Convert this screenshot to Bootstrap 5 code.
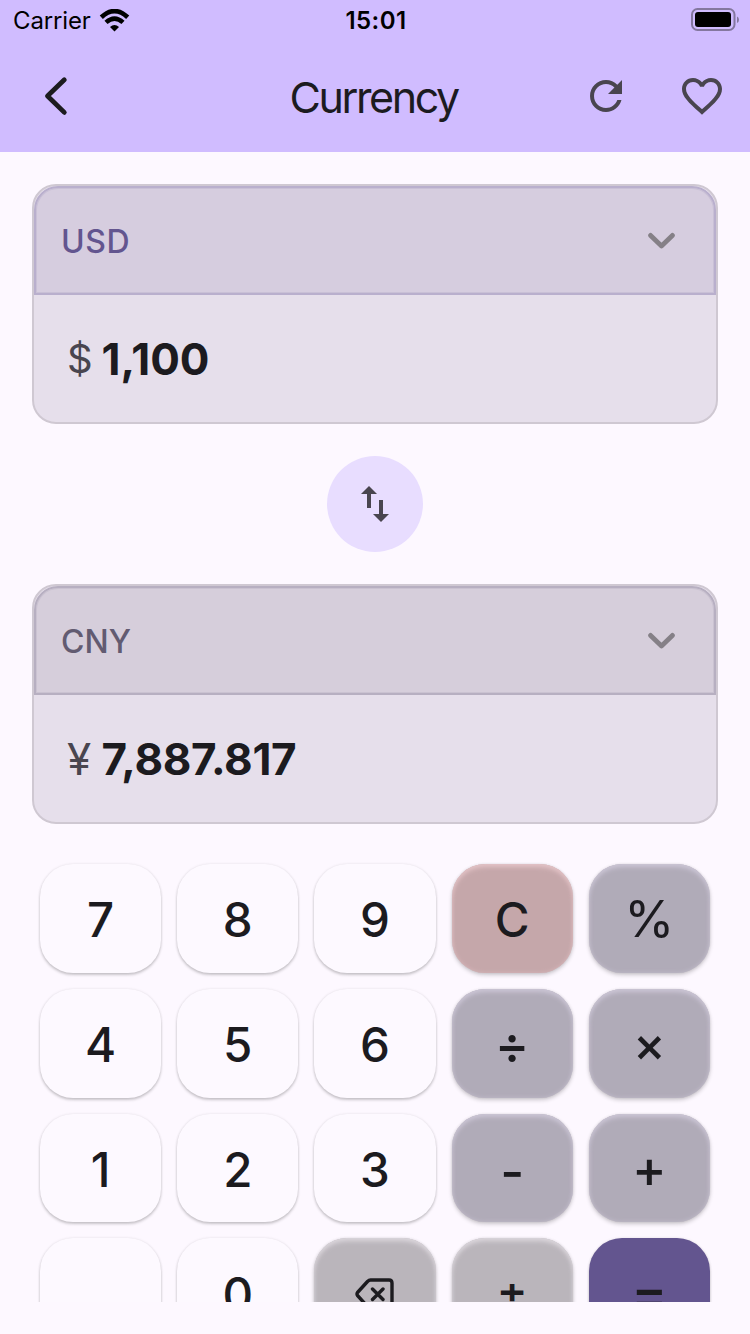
<!DOCTYPE html>
<html lang="en">
<head>
<meta charset="utf-8">
<meta name="viewport" content="width=device-width, initial-scale=1">
<title>Currency</title>
<link href="https://cdn.jsdelivr.net/npm/bootstrap@5.3.0/dist/css/bootstrap.min.css" rel="stylesheet">
<style>
  body { font-family: Inter, "Noto Sans CJK SC", sans-serif; background: #fdf8ff; color: #1c1b1f; height: 1334px; overflow: hidden; }
  svg { display: block; flex: none; }
  .app-top { background: #d0bcff; height: 152px; }
  .status { height: 40px; padding: 2px 11px 0 13px; color: #000; font-size: 24px; line-height: 38px; }
  .status > div { flex: 1 1 0; }
  .carrier { letter-spacing: -.15px; width: 78px; }
  .clock { font-weight: 600; letter-spacing: .4px; }
  .battery { margin-top: -2px; }
  .toolbar { height: 112px; padding: 0 24px; }
  .toolbar > div { flex: 1 1 0; }
  .title { font-size: 43px; font-weight: 400; letter-spacing: -2.400px; line-height: 56px; margin: 2px 0 0; width: 171px; white-space: nowrap; }
  .icon-btn { width: 48px; height: 48px; padding: 0; border: 0; background: none; color: #49454f; }
  .actions { gap: 48px; }
  .converter { padding: 32px 32px 0; gap: 32px; }
  .money { height: 240px; border: 2px solid #cfc8d2; border-radius: 24px; background: #e6dfeb; }
  .money-head { height: 109px; padding: 0 38px 0 25px; border: 2px solid #b9afcd; border-radius: 24px 24px 0 0; background: #d6cddf; box-shadow: inset 0 0 0 1px #c9c0d6; color: #63558f; font-size: 32px; font-weight: 500; letter-spacing: .600px; }
  .money-head span { padding-top: 2px; }
  .money-head.quiet { border-color: #b7afc1; background: #d6cedb; box-shadow: inset 0 0 0 1px #cac2d1; color: #625b71; letter-spacing: .1px; }
  .money-body { padding: 0 33px; height: 127px; font-size: 44px; }
  .sign { color: #49454f; width: 34.500px; }
  .dollar { font-size: 40px; }
  .amount { font-weight: 700; }
  .long { letter-spacing: -.3px; }
  .swap { width: 96px; height: 96px; background: #e8ddff; border: 0; padding: 0; }
  .pad { margin-top: 24px; padding: 16px 40px 0; height: 454px; overflow: hidden; }
  .keys { display: grid; grid-template-columns: repeat(5, 1fr); grid-auto-rows: 108.8px; gap: 16px; }
  .key { border: 0; padding: 3px 0 0; border-radius: 33px; background: #fdf9ff; color: #1c1b1f; font-size: 47.500px; font-weight: 450; line-height: 1; box-shadow: 0 2px 3px rgba(0,0,0,.2), 0 0 3px rgba(0,0,0,.09); }
  .key.op { background: #b0abb8; box-shadow: 0 2px 4px rgba(0,0,0,.2), 0 0 3px rgba(0,0,0,.08), inset 0 4px 5px -1px #cbc5d5, inset 0 0 4px #c3bdcc; }
  .key.clear { background: #c5a7aa; box-shadow: 0 2px 4px rgba(0,0,0,.2), 0 0 3px rgba(0,0,0,.08), inset 0 4px 5px -1px #e3c3c7, inset 0 0 4px #d9b7bb; }
  .key.tool { background: #bab5bb; box-shadow: 0 2px 4px rgba(0,0,0,.2), 0 0 3px rgba(0,0,0,.08), inset 0 4px 5px -1px #dbd6dc, inset 0 0 4px #d0cbd1; }
  .key.sym { font-size: 52px; padding-top: 3px; }
  .key.times { font-size: 49px; }
  .key.low { padding-top: 9px; }
  .key.equal { background: #63558f; font-size: 55px; padding-top: 3px; }
  .key.flip { padding-top: 0; padding-bottom: 1px; }
  .key.percent { font-size: 51px; font-weight: 400; letter-spacing: 0; padding-top: 1px; }
</style>
</head>
<body>
<header class="app-top">
  <div class="status d-flex align-items-center">
    <div class="d-flex align-items-center">
      <span class="carrier">Carrier</span>
      <svg class="ms-2" width="32" height="24" viewBox="0 0 32 24" fill="none" stroke="#000">
        <path d="M2.300 8.300Q15.500-4.100 28.700 8.300" stroke-width="4.600"/>
        <path d="M7 13.400Q15.500 5.700 24 13.400" stroke-width="4.600"/>
        <path d="M11 18Q15.500 13.800 20 18L15.500 22.500Z" fill="#000" stroke="none"/>
      </svg>
    </div>
    <span class="clock">15:01</span>
    <div class="d-flex justify-content-end">
      <svg class="battery" width="49" height="24" viewBox="0 0 49 24">
        <rect x="2" y="1" width="42.500" height="21" rx="5.500" fill="none" stroke="#84779f" stroke-width="2"/>
        <rect x="5" y="4" width="36" height="15" rx="3" fill="#000"/>
        <path d="M47 8.500q2 .7 2 3.200t-2 3.200z" fill="#84779f"/>
      </svg>
    </div>
  </div>
  <nav class="toolbar d-flex align-items-center">
    <div class="d-flex">
      <button class="icon-btn ms-2" aria-label="Back">
        <svg width="48" height="48" viewBox="0 0 48 48" fill="none" stroke="#1c1b1f" stroke-width="4.800" stroke-linecap="round" stroke-linejoin="round"><path d="M32.300 7.800L15.500 24L32.300 40.400"/></svg>
      </button>
    </div>
    <h1 class="title">Currency</h1>
    <div class="actions d-flex justify-content-end">
      <button class="icon-btn" aria-label="Refresh">
        <svg width="48" height="48" viewBox="0 0 24 24" fill="currentColor"><path d="M17.650 6.350C16.200 4.900 14.210 4 12 4c-4.420 0-7.990 3.580-7.990 8s3.570 8 7.990 8c3.730 0 6.840-2.550 7.730-6h-2.080c-.82 2.330-3.040 4-5.650 4-3.310 0-6-2.690-6-6s2.690-6 6-6c1.660 0 3.140.69 4.220 1.780L13 11h7V4l-2.350 2.350z"/></svg>
      </button>
      <button class="icon-btn" aria-label="Favourite">
        <svg width="48" height="48" viewBox="0 0 24 24" fill="currentColor"><path d="M16.500 3c-1.740 0-3.410.81-4.500 2.090C10.910 3.810 9.240 3 7.500 3 4.420 3 2 5.420 2 8.500c0 3.780 3.400 6.860 8.550 11.540L12 21.350l1.450-1.320C18.600 15.360 22 12.280 22 8.500 22 5.420 19.580 3 16.500 3zm-4.400 15.550l-.1.100-.1-.1C7.140 14.240 4 11.390 4 8.500 4 6.500 5.500 5 7.500 5c1.540 0 3.040.99 3.570 2.360h1.870C13.460 5.990 14.960 5 16.500 5c2 0 3.500 1.500 3.500 3.500 0 2.890-3.140 5.740-7.900 10.050z"/></svg>
      </button>
    </div>
  </nav>
</header>

<main>
  <section class="converter d-flex flex-column align-items-stretch">
    <div class="money">
      <div class="money-head d-flex align-items-center justify-content-between">
        <span>USD</span>
        <svg width="28" height="18" viewBox="0 0 28 18" fill="none" stroke="#858087" stroke-width="4.800" stroke-linecap="round" stroke-linejoin="round"><path d="M2.600 3.400L13.500 13.900L24.400 3.400"/></svg>
      </div>
      <div class="money-body d-flex align-items-center"><span class="sign dollar">$</span><span class="amount">1,100</span></div>
    </div>
    <button class="swap rounded-circle align-self-center d-flex align-items-center justify-content-center" aria-label="Swap currencies">
      <svg width="48" height="48" viewBox="0 0 24 24" fill="#49454f"><path d="M16 17.010V10h-2v7.010h-3L15 21l4-3.990h-3zM9 3L5 6.990h3V14h2V6.990h3L9 3z"/></svg>
    </button>
    <div class="money">
      <div class="money-head quiet d-flex align-items-center justify-content-between">
        <span>CNY</span>
        <svg width="28" height="18" viewBox="0 0 28 18" fill="none" stroke="#858087" stroke-width="4.800" stroke-linecap="round" stroke-linejoin="round"><path d="M2.600 3.400L13.500 13.900L24.400 3.400"/></svg>
      </div>
      <div class="money-body d-flex align-items-center"><span class="sign">¥</span><span class="amount long">7,887.817</span></div>
    </div>
  </section>

  <section class="pad">
    <div class="keys">
      <button class="key">7</button><button class="key">8</button><button class="key">9</button><button class="key clear">C</button><button class="key op percent">%</button>
      <button class="key">4</button><button class="key">5</button><button class="key">6</button><button class="key op sym">÷</button><button class="key op sym times">×</button>
      <button class="key">1</button><button class="key">2</button><button class="key">3</button><button class="key op sym low">-</button><button class="key op sym">+</button>
      <button class="key">.</button><button class="key">0</button>
      <button class="key tool d-flex align-items-center justify-content-center" aria-label="Backspace">
        <svg width="40" height="32" viewBox="0 0 40 32" fill="none" stroke="#1c1b1f" stroke-width="3.400" stroke-linecap="round" stroke-linejoin="round"><path d="M15.500 2H34Q37 2 37 5V27Q37 30 34 30H15.500Q14 30 12.500 28.500L2.500 17.500Q1.500 16 2.500 14.500L12.500 3.500Q14 2 15.500 2ZM17.500 11L28 21.500M28 11L17.500 21.500"/></svg>
      </button>
      <button class="key tool flip">±</button><button class="key equal">=</button>
    </div>
  </section>
</main>
<script src="https://cdn.jsdelivr.net/npm/bootstrap@5.3.0/dist/js/bootstrap.bundle.min.js"></script>
</body>
</html>
